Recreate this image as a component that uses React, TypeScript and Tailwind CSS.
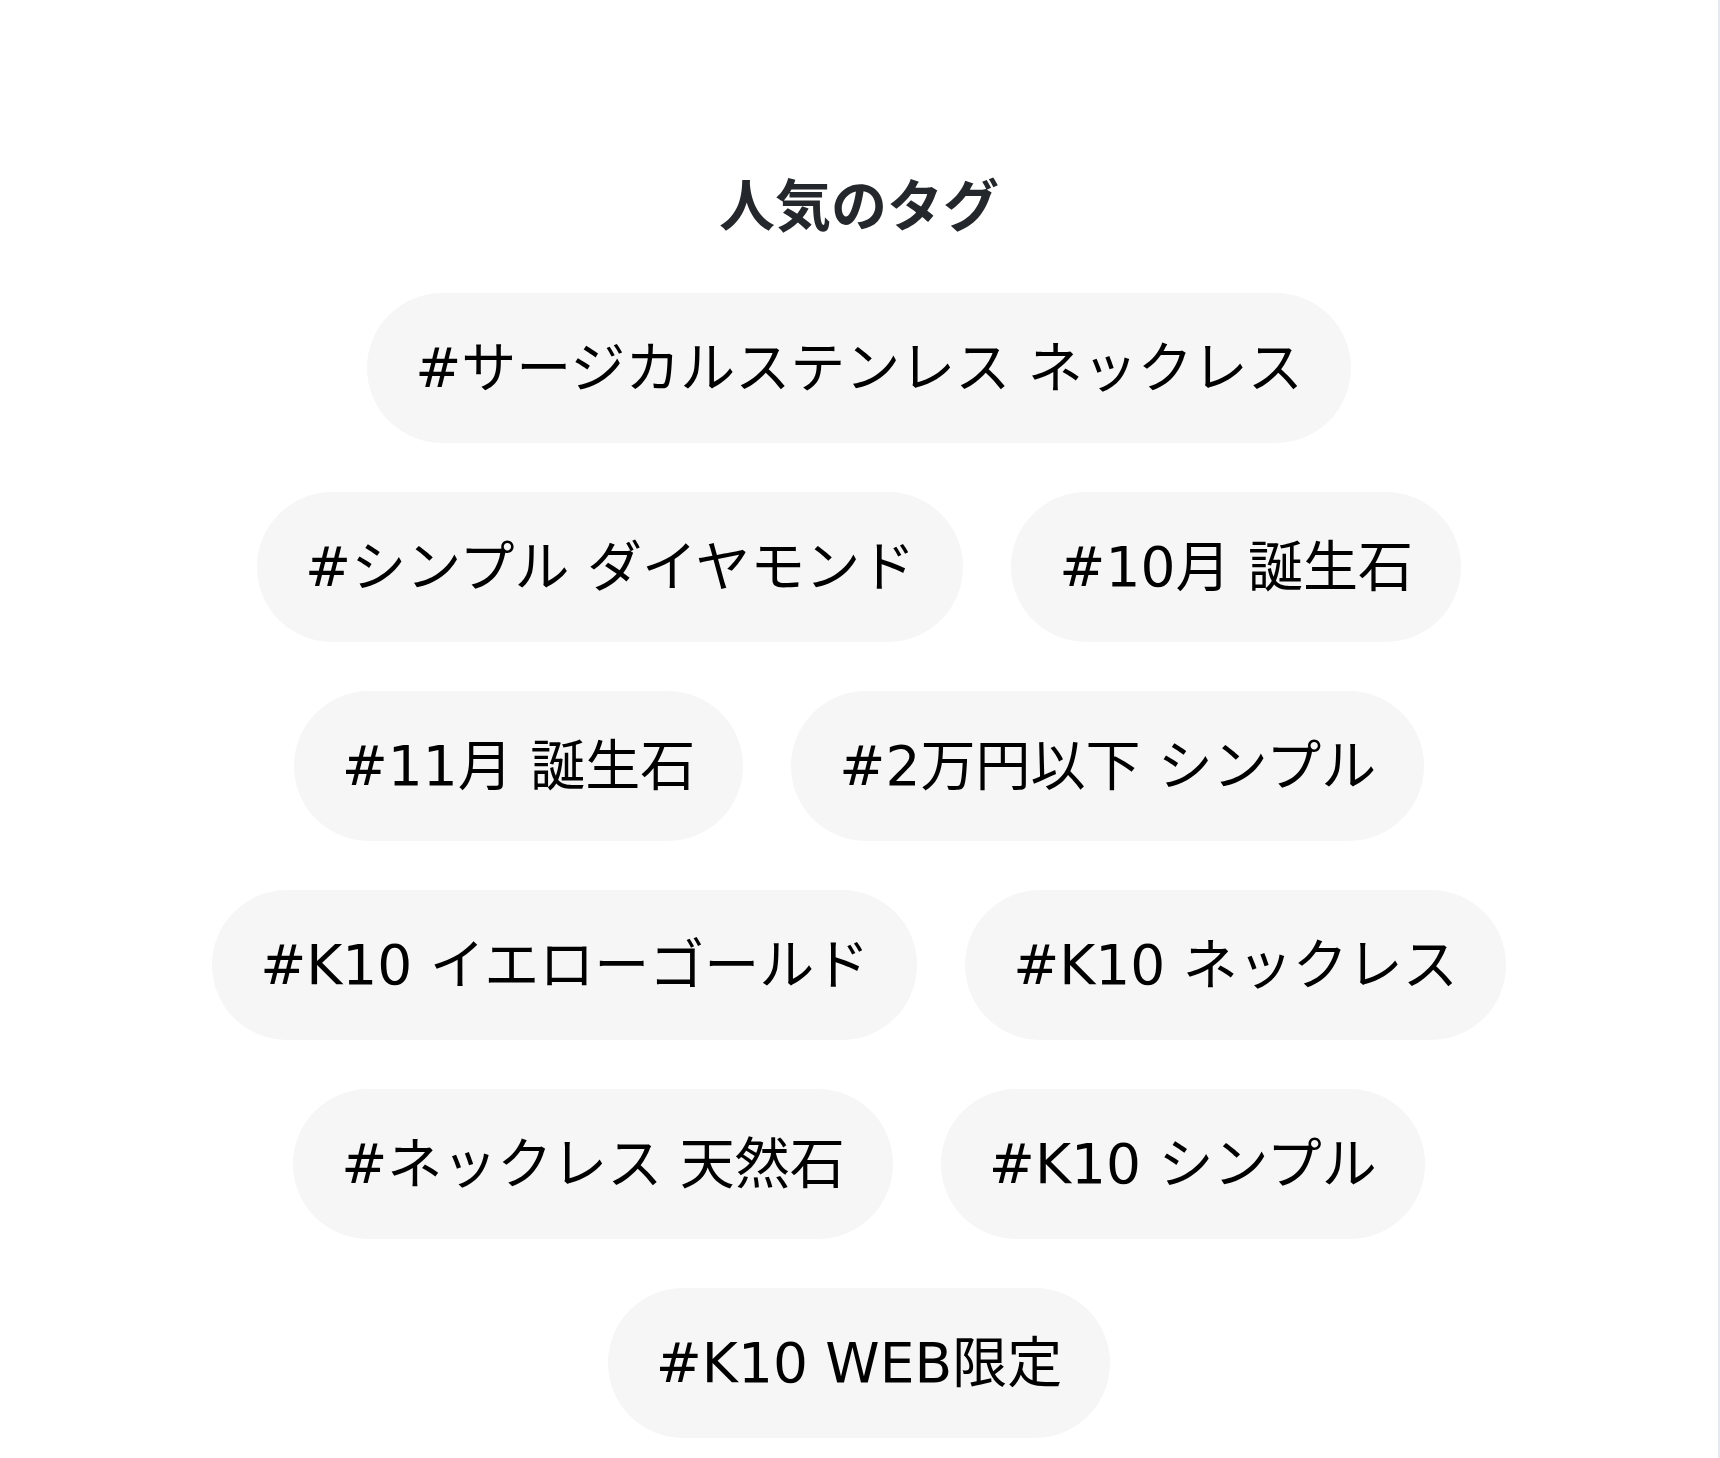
import React from "react";

const tags: string[] = [
  "#サージカルステンレス ネックレス",
  "#シンプル ダイヤモンド",
  "#10月 誕生石",
  "#11月 誕生石",
  "#2万円以下 シンプル",
  "#K10 イエローゴールド",
  "#K10 ネックレス",
  "#ネックレス 天然石",
  "#K10 シンプル",
  "#K10 WEB限定",
];

function Tag({ label }: { label: string }) {
  return (
    <a
      href="#"
      className="flex h-[150px] items-center rounded-full bg-[#f6f6f6] px-12 text-[55px] leading-none whitespace-nowrap text-black [font-family:'DejaVu_Sans','Noto_Sans_CJK_JP',sans-serif]"
    >
      {label}
    </a>
  );
}

export default function App() {
  return (
    <div className="min-h-screen w-full bg-white">
      <div className="min-h-[1458px] w-[1720px] border-r-2 border-[#e6eaf0] pt-[160px] pb-[19px]">
        <h2 className="mb-[49px] text-center text-[56px] leading-[84px] font-bold text-[#24272b] [font-family:'Noto_Sans_CJK_JP',sans-serif]">
          人気のタグ
        </h2>
        <div className="mx-auto flex max-w-[1480px] flex-wrap justify-center gap-x-12 gap-y-[49px]">
          {tags.map((t) => (
            <Tag key={t} label={t} />
          ))}
        </div>
      </div>
    </div>
  );
}
